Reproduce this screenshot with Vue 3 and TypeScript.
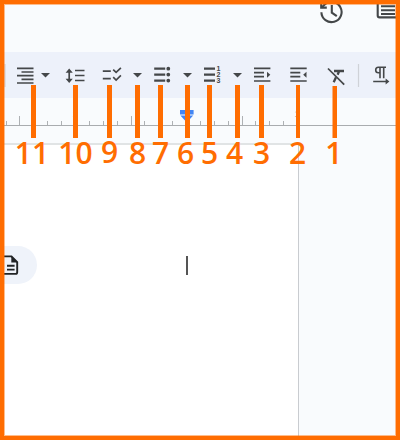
<script setup lang="ts">
interface Callout {
  n: number
  x: number
  w: number
  y: number
  cx: number
  base: number
}

const callouts: Callout[] = [
  { n: 11, x: 31, w: 5, y: 85, cx: 32, base: 164 },
  { n: 10, x: 73, w: 5, y: 85, cx: 75.5, base: 164 },
  { n: 9, x: 107, w: 5, y: 85, cx: 109.7, base: 163 },
  { n: 8, x: 135, w: 5, y: 85, cx: 137.5, base: 164 },
  { n: 7, x: 158, w: 5, y: 85, cx: 160.5, base: 164 },
  { n: 6, x: 185, w: 5, y: 85, cx: 185.7, base: 164 },
  { n: 5, x: 207, w: 5, y: 85, cx: 209.5, base: 164 },
  { n: 4, x: 235, w: 5, y: 85, cx: 234.6, base: 164 },
  { n: 3, x: 259, w: 5, y: 85, cx: 261.5, base: 164 },
  { n: 2, x: 296, w: 4, y: 85, cx: 297.5, base: 164 },
  { n: 1, x: 332.5, w: 4.5, y: 86, cx: 333.8, base: 164 },
]

const ticks = Array.from({ length: 21 }, (_, i) => ({
  x: Math.round(5.6 + i * 13.88),
  long: i % 8 === 1,
  hidden: i === 5 || i === 13,
}))
</script>

<template>
  <div class="editor">
    <header class="top">
      <svg class="history" width="28" height="26" viewBox="318 0 28 26">
        <path d="M321.4 12.2a10.1 10.1 0 1 0 3-7.4l-2.6 2.6" />
        <path d="M321.2 3v4.6h5.6" />
        <path d="M331.8 5v7.6l5 3.6" />
      </svg>
      <svg class="comment" width="20" height="26" viewBox="376 0 20 26">
        <path d="M377.7 0v15.6q0 1.8 1.8 1.8H396" />
        <path d="M381 6.2h14M381 10.2h14M381 14h14" />
      </svg>
    </header>

    <div class="toolbar">
      <svg width="36" height="46" viewBox="4 52 36 46">
        <path class="sep" d="M5 64v23" />
        <path d="M17 68.4h16.5M21.5 72h12M17 75.6h16.5M21.5 79.3h12M17 83h16.5" />
      </svg>
      <svg width="22" height="46" viewBox="40 52 22 46"><path class="solid" d="M41 73h9l-4.5 4.6z" /></svg>
      <svg width="36" height="46" viewBox="62 52 36 46">
        <path d="M69.2 71v10M75 70.5h9.5M75 75.5h9.5M75 80.5h9.5" />
        <path class="solid" d="M65.6 72.8l3.6-4.2 3.6 4.2zM65.6 78.8l3.6 4.2 3.6-4.2z" />
      </svg>
      <svg width="32" height="46" viewBox="98 52 32 46">
        <path d="M102.8 71.2h8M102.8 78.6h8M113.2 69.6l2.9 2.8 4.8-4.6M113.2 77.2l2.9 2.8 4.8-4.6" />
      </svg>
      <svg width="20" height="46" viewBox="130 52 20 46"><path class="solid" d="M133 73h9l-4.5 4.6z" /></svg>
      <svg width="30" height="46" viewBox="150 52 30 46">
        <path class="heavy" d="M154.2 68.7h11M154.2 74.6h11M154.2 80.6h11" />
        <path class="dots" d="M168.3 68.7h0M168.3 74.6h0M168.3 80.6h0" />
      </svg>
      <svg width="20" height="46" viewBox="180 52 20 46"><path class="solid" d="M183 73h9l-4.5 4.6z" /></svg>
      <svg width="28" height="46" viewBox="200 52 28 46">
        <path class="heavy" d="M204 68.7h11M204 74.6h11M204 80.6h11" />
        <text class="digit" x="216.6" y="71.2">1</text>
        <text class="digit" x="216.6" y="77.2">2</text>
        <text class="digit" x="216.6" y="83.2">3</text>
      </svg>
      <svg width="22" height="46" viewBox="228 52 22 46"><path class="solid" d="M233 73h9l-4.5 4.6z" /></svg>
      <svg width="34" height="46" viewBox="250 52 34 46">
        <path d="M254 68.4h16.4M254 72.6h10M254 76.7h10M254 81h16.4" />
        <path class="solid" d="M267 71.7l3.3 3-3.3 3z" />
      </svg>
      <svg width="38" height="46" viewBox="284 52 38 46">
        <path d="M290.3 68.4h16.4M290.3 72.6h10M290.3 76.7h10M290.3 81h16.4" />
        <path class="solid" d="M306.5 71.7l-3.3 3 3.3 3z" />
      </svg>
      <svg width="30" height="46" viewBox="322 52 30 46">
        <path d="M328 68.5l16.2 16.2" />
        <path class="heavy" d="M334 71h10M339 71.5l-1.4 3.2M336 77.2l-2.3 5" />
      </svg>
      <svg width="44" height="46" viewBox="352 52 44 46">
        <path class="sep" d="M358.5 64v23" />
        <path class="fine" d="M386 67.3h-7.6a2.7 2.7 0 0 0 0 5.4h1.6M380 67.5v10.7M383.7 67.5v10.7M373.2 81.5h14" />
        <path class="solid" d="M385.6 78.4l3.8 3.1-3.8 3.1z" />
      </svg>
    </div>

    <div class="ruler">
      <svg width="392" height="28" viewBox="4 98 392 28">
        <template v-for="(t, i) in ticks" :key="i">
          <rect v-if="!t.hidden" class="tick" :x="t.x" :y="t.long ? 116 : 121" width="1" :height="t.long ? 9 : 4" />
        </template>
        <text class="mark" x="75" y="117">1</text>
        <text class="mark" x="297" y="117">1</text>
        <rect class="base" x="4" y="125" width="392" height="1" />
        <path class="marker" d="M180 110h13.6v4.6H180zM180.4 115.6h12.8l-6.4 6.8z" />
      </svg>
    </div>

    <main class="canvas">
      <div class="page">
        <div class="outline">
          <svg width="16" height="22" viewBox="4 254 16 22">
            <path d="M2 256.4h9.5l5.7 5.7v10.2q0 1.6-1.6 1.6H2M7 265.7h7.6M7 269.6h7.6" />
            <path class="fold" d="M11.3 256v6.4h6.4z" />
          </svg>
        </div>
        <div class="caret"></div>
      </div>
    </main>

    <svg class="callouts" width="400" height="440" viewBox="0 0 400 440">
      <g v-for="c in callouts" :key="c.n">
        <rect :x="c.x" :y="c.y" :width="c.w" :height="138 - c.y" />
        <text :x="c.cx" :y="c.base">{{ c.n }}</text>
      </g>
    </svg>
  </div>
</template>

<style>
body {
  margin: 0;
}
</style>

<style scoped>
.editor {
  position: relative;
  box-sizing: border-box;
  width: 400px;
  height: 440px;
  border: 4px solid #ff6d01;
  background: #f9fbfd;
  overflow: hidden;
  display: flex;
  flex-direction: column;
}
.editor::after {
  content: '';
  position: absolute;
  inset: 0;
  border: 1px solid #ff6d01;
  opacity: 0.45;
}
svg {
  display: block;
  flex: none;
  fill: none;
  stroke: #444749;
  stroke-width: 1.7;
}
.top {
  height: 48px;
  display: flex;
  justify-content: flex-end;
  gap: 30px;
}
.top svg {
  margin-top: -4px;
  stroke-width: 2.1;
}
.toolbar {
  height: 46px;
  display: flex;
  background: #edf1fa;
}
.solid {
  fill: #444749;
  stroke: none;
}
.heavy {
  stroke-width: 2.3;
}
.fine {
  stroke-width: 1.6;
}
.dots {
  stroke-width: 3.8;
  stroke-linecap: round;
}
.sep {
  stroke: #cfd2d8;
  stroke-width: 1.2;
}
.digit {
  font: bold 7px 'Liberation Sans', sans-serif;
  fill: #444749;
  stroke: none;
}
.ruler {
  height: 28px;
}
.ruler svg {
  stroke: none;
}
.tick {
  fill: #aeb1b4;
}
.base {
  fill: #a9acaf;
}
.mark {
  font: 9px 'Liberation Sans', sans-serif;
  text-anchor: middle;
  fill: #a0a3a6;
}
.marker {
  fill: #4285f4;
}
.canvas {
  flex: 1;
  padding-top: 17px;
}
.page {
  box-sizing: border-box;
  width: 295px;
  height: 100%;
  border-top: 2px solid #e1e4e5;
  border-right: 1px solid #c9ccd0;
  background: #fff;
  display: flex;
  align-items: flex-start;
  justify-content: space-between;
}
.outline {
  box-sizing: border-box;
  width: 32.5px;
  height: 38px;
  margin-top: 101px;
  padding-top: 8px;
  border-radius: 0 19px 19px 0;
  background: #eff3fa;
}
.outline svg {
  stroke: #222426;
  stroke-width: 1.9;
}
.fold {
  fill: #222426;
  stroke: none;
}
.caret {
  width: 2px;
  height: 19px;
  margin: 111px 110px 0 0;
  background: #555;
}
.callouts {
  position: absolute;
  left: -4px;
  top: -4px;
  fill: #ff6d01;
  stroke: none;
}
.callouts text {
  font: 600 30px 'Open Sans', 'Noto Sans', sans-serif;
  text-anchor: middle;
}
</style>
